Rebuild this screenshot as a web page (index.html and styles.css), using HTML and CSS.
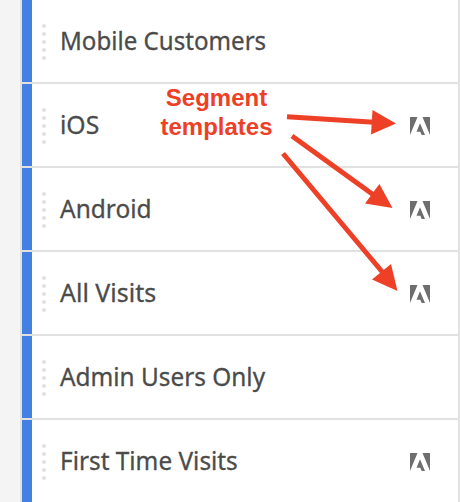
FILE: index.html
```html
<!DOCTYPE html>
<html lang="en">
<head>
<meta charset="utf-8">
<title>Segments</title>
<link rel="stylesheet" href="styles.css">
</head>
<body>
<svg class="defs" width="0" height="0" aria-hidden="true">
  <symbol id="adobe" viewBox="0 0 20 18">
    <path d="M0 0H7.5L0 18ZM12.5 0H20V18ZM10 6.2L15 18H11.7L10.3 14.8H6.5Z"/>
  </symbol>
  <symbol id="grip" viewBox="0 0 4 36">
    <circle cx="2" cy="2" r="2"/><circle cx="2" cy="10" r="2"/><circle cx="2" cy="18" r="2"/><circle cx="2" cy="26" r="2"/><circle cx="2" cy="34" r="2"/>
  </symbol>
</svg>
<main class="panel">
  <ul class="segments">
    <li class="row"><svg class="grip"><use href="#grip"/></svg><span class="label mobile">Mobile Customers</span></li>
    <li class="row"><svg class="grip"><use href="#grip"/></svg><span class="label ios">iOS</span><svg class="logo"><use href="#adobe"/></svg></li>
    <li class="row"><svg class="grip"><use href="#grip"/></svg><span class="label android">Android</span><svg class="logo"><use href="#adobe"/></svg></li>
    <li class="row"><svg class="grip"><use href="#grip"/></svg><span class="label all">All Visits</span><svg class="logo"><use href="#adobe"/></svg></li>
    <li class="row"><svg class="grip"><use href="#grip"/></svg><span class="label admin">Admin Users Only</span></li>
    <li class="row"><svg class="grip"><use href="#grip"/></svg><span class="label first">First Time Visits</span><svg class="logo"><use href="#adobe"/></svg></li>
  </ul>
</main>
<div class="note">Segment<br>templates</div>
<svg class="arrows" viewBox="0 0 460 502" aria-hidden="true">
  <path class="shaft" d="M287 116.7L374 122.3M292 136L375 196M283 153.5L384 274"/>
  <path class="head" d="M372.5 110L396 123.5L371 134.5ZM379.4 184L392.5 208L365 203.5ZM391 264L397.5 291L372 279.5Z"/>
</svg>
</body>
</html>
```
FILE: styles.css
```css
body {
  margin: 0;
  height: 502px;
  overflow: hidden;
  background: #f4f4f4;
  font-family: "Noto Sans", "Open Sans", sans-serif;
}
.defs { position: absolute; }
.panel {
  box-sizing: border-box;
  height: 502px;
  margin-left: 20px;
  overflow: hidden;
  background: #fff;
  border-left: 2px solid #e1e1e1;
  border-right: 2px solid #e1e1e1;
}
.segments {
  margin: 0;
  padding: 0;
  list-style: none;
}
.row {
  display: flex;
  align-items: center;
  box-sizing: border-box;
  height: 84px;
  padding: 2px 28px 0 10px;
  border-bottom: 2px solid #e1e1e1;
  background: linear-gradient(#4280e2, #4280e2) left / 10px 100% no-repeat;
  background-clip: padding-box;
}
.grip {
  flex: none;
  width: 4px;
  height: 36px;
  margin-left: 10px;
  fill: #e1e1e1;
}
.label {
  margin: 0 0 4px 14px;
  color: #4b4b4b;
  font-size: 26px;
  line-height: 36px;
  white-space: nowrap;
  -webkit-text-stroke: .3px #4b4b4b;
  transform-origin: left;
}
.mobile { transform: scaleX(.927); }
.ios { transform: scaleX(.95); }
.android { transform: scaleX(.941); }
.all { transform: scaleX(.96); }
.admin { transform: scaleX(.937); }
.first { transform: scaleX(.937); }
.logo {
  flex: none;
  width: 20px;
  height: 18px;
  margin-left: auto;
  fill: #6e6e6e;
}
.note {
  position: absolute;
  left: 150px;
  top: 83px;
  width: 133px;
  color: #ee4026;
  font: bold 24px/29px "Liberation Sans", Helvetica, sans-serif;
  text-align: center;
}
.arrows {
  position: absolute;
  left: 0;
  top: 0;
  width: 460px;
  height: 502px;
}
.shaft { fill: none; stroke: #ee4026; stroke-width: 5; }
.head { fill: #ee4026; }
```
